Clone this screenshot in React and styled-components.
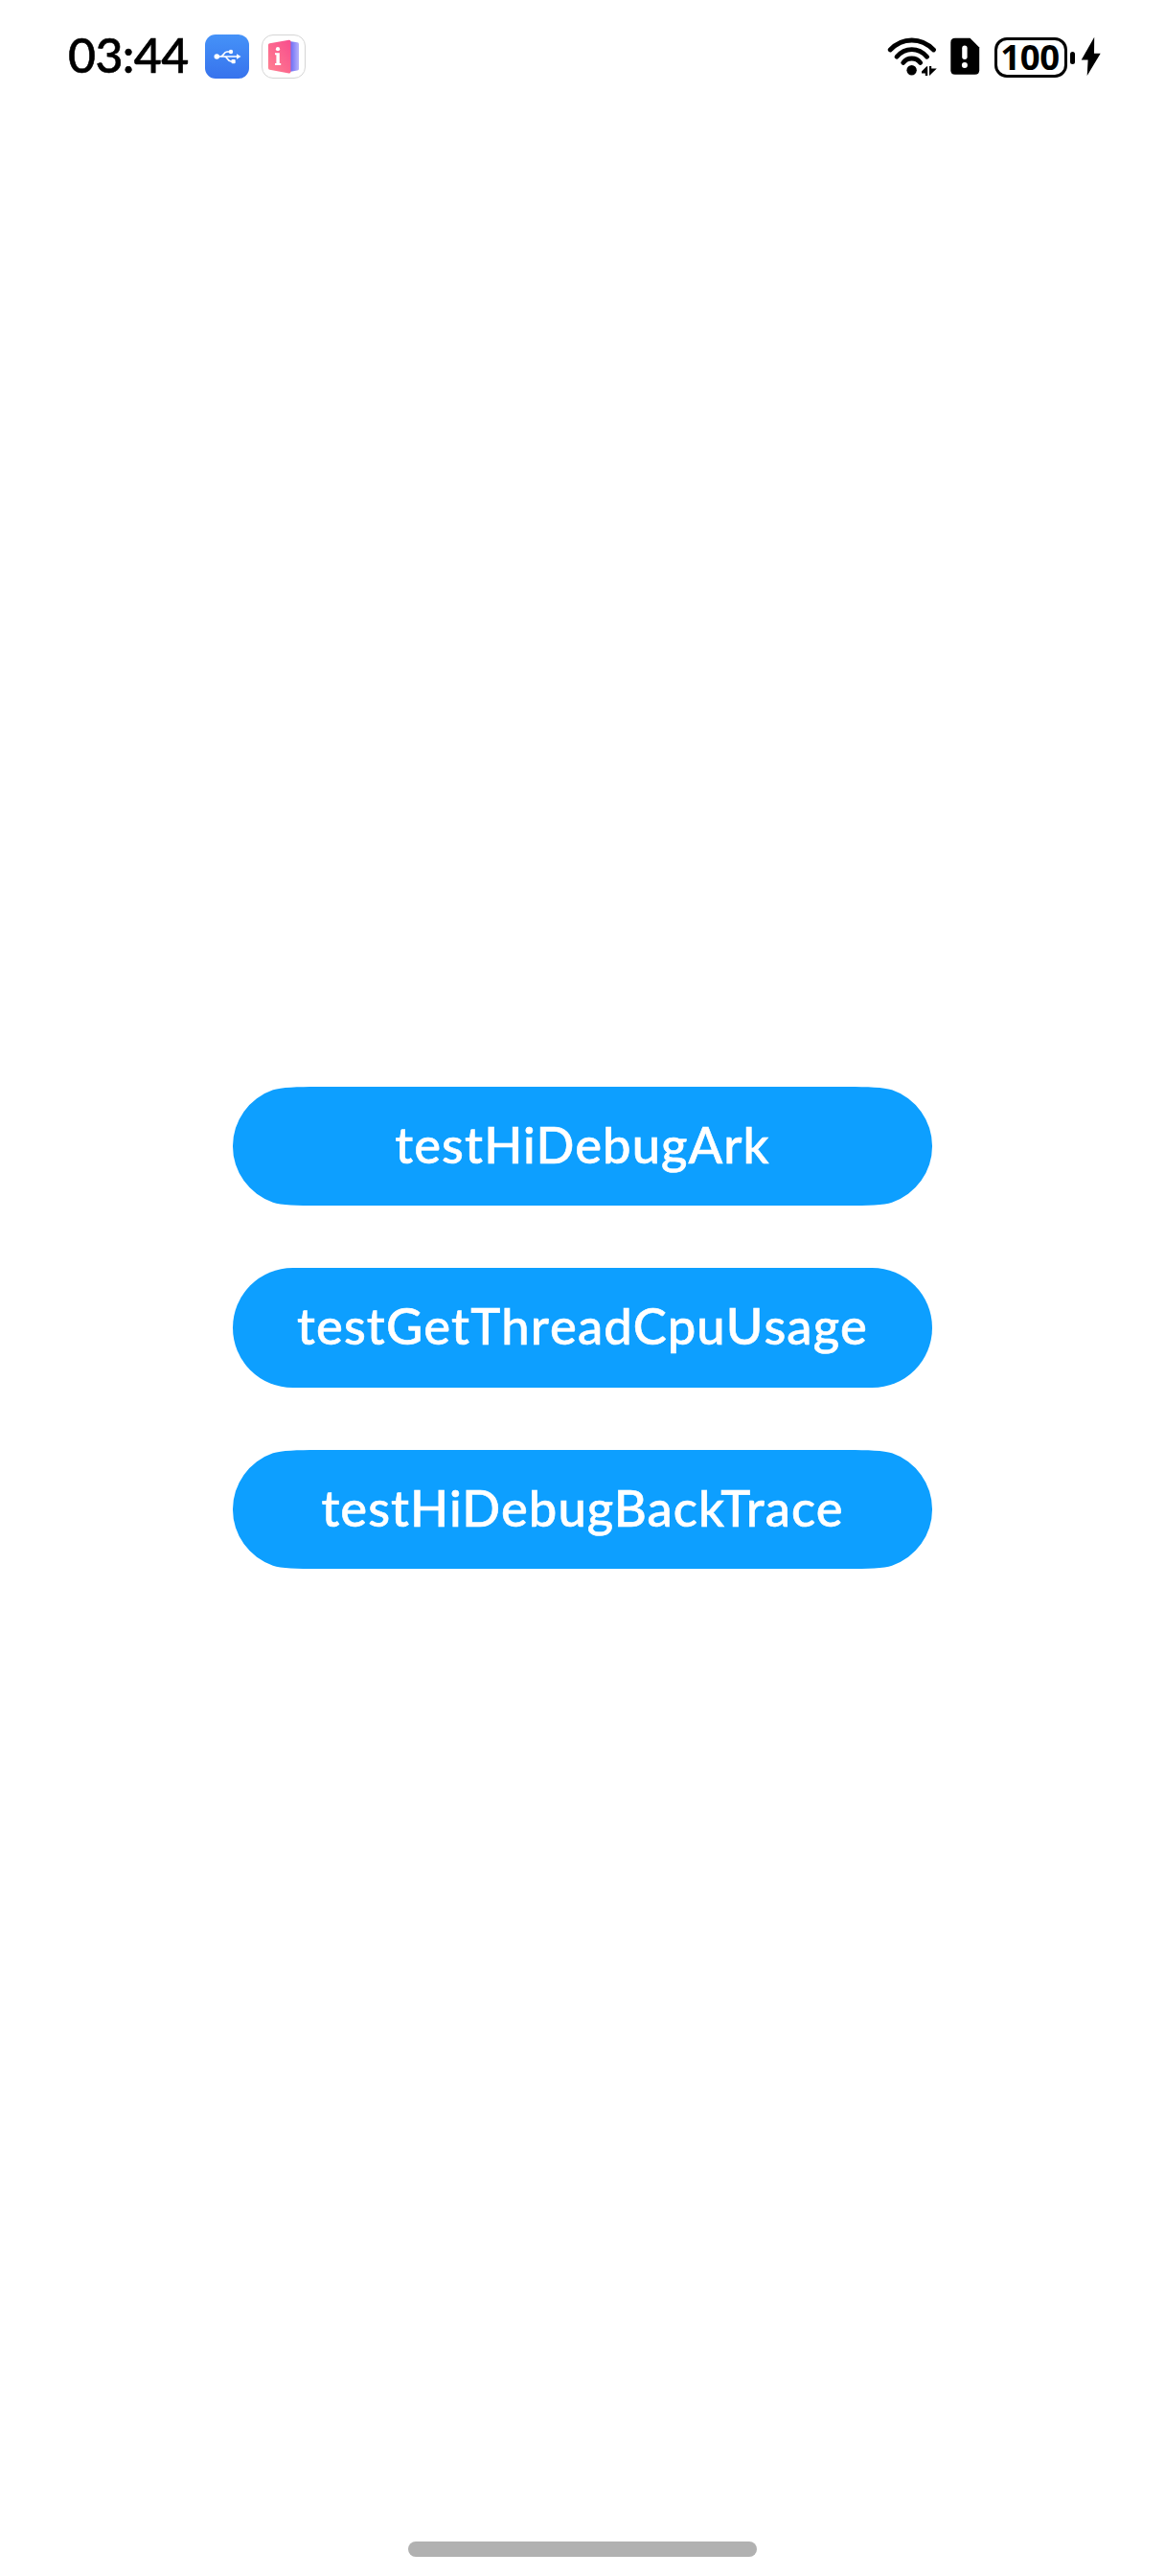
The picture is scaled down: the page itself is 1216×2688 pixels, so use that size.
import React from "react";
import styled, { createGlobalStyle } from "styled-components";

const GlobalStyle = createGlobalStyle`
  * { box-sizing: border-box; }
  body { margin: 0; background: #fff; }
`;

const Screen = styled.div`
  display: flex;
  flex-direction: column;
  width: 1216px;
  height: 2688px;
  background: #fff;
  font-family: Lato, "Liberation Sans", sans-serif;
`;

const StatusBar = styled.header`
  display: flex;
  align-items: center;
  justify-content: space-between;
  height: 118px;
  padding: 0 66px 0 71px;
`;

const StatusGroup = styled.div`
  display: flex;
  align-items: center;
`;

const Clock = styled.span`
  width: 143px;
  padding-bottom: 4px;
  font-size: 50px;
  font-weight: 500;
  line-height: 60px;
  letter-spacing: -0.6px;
  color: #000;
  white-space: nowrap;
  -webkit-text-stroke: 0.6px #000;
`;

const Glyph = styled.svg`
  display: block;
  flex: none;
  margin-left: ${(p) => p.$gap || 0}px;
  margin-top: ${(p) => p.$drop || 0}px;
`;

const Battery = styled.div`
  display: flex;
  align-items: center;
  margin: 2px 0 0 15px;
`;

const BatteryCell = styled.div`
  display: flex;
  align-items: center;
  justify-content: center;
  width: 76px;
  height: 42px;
  padding: 0 2px 2px 0;
  border: 3.5px solid #000;
  border-radius: 13px;
  font-family: "Noto Sans", sans-serif;
  font-size: 36.5px;
  font-weight: 700;
  line-height: 35px;
  letter-spacing: -0.4px;
`;

const BatteryTip = styled.div`
  width: 5px;
  height: 13px;
  margin-left: 3px;
  border-radius: 2.5px;
  background: #000;
`;

const Actions = styled.main`
  display: flex;
  flex: 1;
  flex-direction: column;
  align-items: center;
  gap: 65px;
  padding-top: 1016px;
`;

const smoothEnds =
  'path("M88 0H642C662 0 680 .6 688 3.3A62 62 0 0 1 688 120.7C680 123.4 662 124 642 124H88C68 124 50 123.4 42 120.7A62 62 0 0 1 42 3.3C50 .6 68 0 88 0Z")';

const ActionButton = styled.button`
  display: flex;
  align-items: center;
  justify-content: center;
  width: 730px;
  height: ${(p) => (p.$smooth ? 124 : 125)}px;
  padding: 0 0 5px 0;
  border: 0;
  border-radius: ${(p) => (p.$smooth ? 0 : 63)}px;
  clip-path: ${(p) => (p.$smooth ? smoothEnds : "none")};
  background: #0d9fff;
  color: #fff;
  font-family: inherit;
  font-size: 52.5px;
  font-weight: 500;
  font-kerning: ${(p) => (p.$kerned ? "normal" : "none")};
  line-height: 64px;
  letter-spacing: ${(p) => p.$tracking}px;
  white-space: nowrap;
  -webkit-text-stroke: 0.6px #fff;
`;

const HomeArea = styled.footer`
  display: flex;
  justify-content: center;
  height: 36px;
`;

const HomeIndicator = styled.div`
  width: 364px;
  height: 16px;
  border-radius: 8px;
  background: #b1b1b1;
`;

const UsbIcon = () => (
  <Glyph width="46" height="46" viewBox="0 0 46 46">
    <defs>
      <linearGradient id="usb" x1="0" y1="0" x2="0" y2="1">
        <stop offset="0" stopColor="#4592f8" />
        <stop offset="1" stopColor="#3773ed" />
      </linearGradient>
    </defs>
    <rect width="46" height="46" rx="11" fill="url(#usb)" />
    <g stroke="#fff" strokeWidth="1.6" fill="none">
      <path d="M12 23H34M16 23C20 23 19 18 23 18H26M20 23C24 23 23 28 27 28H29" />
    </g>
    <g fill="#fff">
      <circle cx="12.3" cy="23" r="2.8" />
      <circle cx="27" cy="18" r="2.2" />
      <rect x="27.5" y="26" width="4.2" height="4.2" rx="1" />
      <path d="M33 20.2L37.5 23L33 25.8Z" />
    </g>
  </Glyph>
);

const InfoBookIcon = () => (
  <Glyph $gap={13} width="46" height="46" viewBox="0 0 46 46">
    <defs>
      <linearGradient id="cover" x1="1" y1="0" x2="0" y2="1">
        <stop offset="0" stopColor="#f84c8d" />
        <stop offset="1" stopColor="#ff8190" />
      </linearGradient>
      <linearGradient id="pages" x1="0" y1="0" x2="1" y2="0">
        <stop offset="0" stopColor="#6262f2" />
        <stop offset="1" stopColor="#b7b2fc" />
      </linearGradient>
    </defs>
    <rect x=".5" y=".5" width="45" height="45" rx="11.5" fill="#fff" stroke="#d5d5d5" />
    <path d="M29 7L37.5 8.3Q39 8.5 39 10V36Q39 37.4 37.5 37.6L29 39Z" fill="url(#pages)" />
    <path d="M8.5 9.2L28.5 5.7Q30.5 5.4 30.5 7.4V38.8Q30.5 40.8 28.5 40.4L8.5 36.8Q7 36.5 7 35V10.8Q7 9.5 8.5 9.2Z" fill="url(#cover)" />
    <circle cx="17" cy="15.2" r="2.1" fill="#fff" />
    <path d="M14 19.2H18.8V30H20.2V32H14V30H15.4V21.2H14Z" fill="#fff" />
  </Glyph>
);

const WifiIcon = () => (
  <Glyph $drop={2} width="52" height="42" viewBox="0 0 52 42">
    <g fill="none" stroke="#000" strokeWidth="4.8" strokeLinecap="round">
      <path d="M3.2 13Q12.8 3 25.7 3T48.5 13" />
      <path d="M10 20.3Q16.6 12.7 25.7 12.7T41.6 20.3" />
      <path d="M16.7 26.4Q20.2 22 25.7 22T34.7 26.4" />
    </g>
    <circle cx="25.6" cy="34.3" r="5.2" />
    <path d="M36 35.4L41.2 30.2H42.2V40H39.8V37.4H36ZM44 30V40L51.8 32.6H46.2V30Z" />
  </Glyph>
);

const SimAlertIcon = () => (
  <Glyph $gap={14} width="31" height="40" viewBox="0 0 31 40">
    <path d="M5 .8H20.5L30.2 10.5V34.2Q30.2 38.8 25.6 38.8H4.9Q.3 38.8 .3 34.2V5.4Q.3 .8 5 .8Z" />
    <rect x="12.2" y="8.5" width="5.4" height="14.5" rx="2.7" fill="#fff" />
    <circle cx="14.9" cy="29" r="3" fill="#fff" />
  </Glyph>
);

const BoltIcon = () => (
  <Glyph $gap={6} width="22" height="42" viewBox="0 0 22 42">
    <path d="M14.2 .7L.7 24.4H7.6L6.7 41L20.7 17.8H14Z" />
  </Glyph>
);

const actions = [
  { label: "testHiDebugArk", smooth: true, kerned: true, tracking: 1.1 },
  { label: "testGetThreadCpuUsage", smooth: false, kerned: false, tracking: 1.05 },
  { label: "testHiDebugBackTrace", smooth: true, kerned: true, tracking: 1.05 },
];

export default function App() {
  return (
    <Screen>
      <GlobalStyle />
      <StatusBar>
        <StatusGroup>
          <Clock>03:44</Clock>
          <UsbIcon />
          <InfoBookIcon />
        </StatusGroup>
        <StatusGroup>
          <WifiIcon />
          <SimAlertIcon />
          <Battery>
            <BatteryCell>100</BatteryCell>
            <BatteryTip />
          </Battery>
          <BoltIcon />
        </StatusGroup>
      </StatusBar>
      <Actions>
        {actions.map((a) => (
          <ActionButton key={a.label} $smooth={a.smooth} $kerned={a.kerned} $tracking={a.tracking}>
            {a.label}
          </ActionButton>
        ))}
      </Actions>
      <HomeArea>
        <HomeIndicator />
      </HomeArea>
    </Screen>
  );
}
